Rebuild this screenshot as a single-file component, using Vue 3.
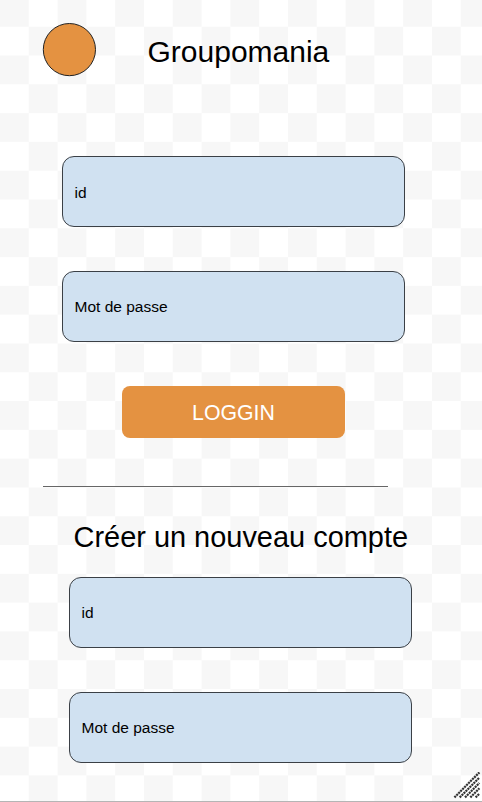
<script setup>
const grip = [0, 5.3, 10.6, 15.9, 21.2]
</script>

<template>
  <main class="page">
    <header class="header">
      <svg class="logo" viewBox="0 0 54 54"><circle cx="27.4" cy="26.6" r="26.1" /></svg>
      <h1 class="brand">Groupomania</h1>
    </header>
    <form class="form login" @submit.prevent>
      <label class="field first">id</label>
      <label class="field">Mot de passe</label>
      <button class="submit">LOGGIN</button>
    </form>
    <hr class="rule" />
    <h2 class="subtitle">Créer un nouveau compte</h2>
    <form class="form signup" @submit.prevent>
      <label class="field">id</label>
      <label class="field">Mot de passe</label>
    </form>
    <svg class="grip" viewBox="0 0 28 28">
      <line v-for="o in grip" :key="o" :x1="1.4 + o" y1="25.4" x2="26.4" :y2="0.4 + o" />
    </svg>
  </main>
</template>

<style>
body {
  margin: 0;
}
</style>

<style scoped>
.page {
  position: relative;
  box-sizing: border-box;
  width: 482px;
  height: 802px;
  padding-top: 23px;
  overflow: hidden;
  border-bottom: 1px solid #b5b5b5;
  background: repeating-conic-gradient(#fff 0 25%, #f7f7f7 0 50%) 0 -2.1px / 57.6px 57.6px;
  color: #000;
  font-family: "Liberation Sans", Arial, sans-serif;
}
.header {
  display: flex;
  height: 54px;
  padding-left: 42px;
}
.logo {
  width: 54px;
  height: 54px;
  fill: #e49241;
  stroke: #222;
  stroke-width: 1;
}
.brand {
  margin: 12px 0 0 51.5px;
  font-size: 30px;
  font-weight: 400;
  line-height: 34px;
}
.form {
  display: flex;
  flex-direction: column;
}
.login {
  gap: 44px;
  margin: 79px 0 0 62px;
}
.signup {
  gap: 44px;
  margin: 23px 0 0 69px;
}
.field {
  display: flex;
  align-items: center;
  box-sizing: border-box;
  width: 343px;
  height: 71px;
  padding: 0 0 0 11.5px;
  border: 1px solid #3b4046;
  border-radius: 12px;
  background: #d0e1f1;
  font-size: 15.5px;
}
.first {
  padding-top: 2px;
}
.submit {
  width: 223px;
  height: 52px;
  margin-left: 60px;
  padding: 3px 0 0;
  border: 0;
  border-radius: 8px;
  background: #e49241;
  color: #fff;
  font-family: inherit;
  font-size: 21.3px;
}
.rule {
  height: 1px;
  margin: 48px 0 0 43px;
  width: 345px;
  border: 0;
  background: #666;
}
.subtitle {
  margin: 33px 0 0 73.5px;
  font-size: 28.95px;
  font-weight: 400;
  line-height: 34px;
  white-space: nowrap;
}
.grip {
  position: absolute;
  right: 1px;
  bottom: 1px;
  width: 28px;
  height: 28px;
  stroke: #333;
  stroke-width: 2.2;
  stroke-dasharray: 2.1 0.7;
}
</style>
